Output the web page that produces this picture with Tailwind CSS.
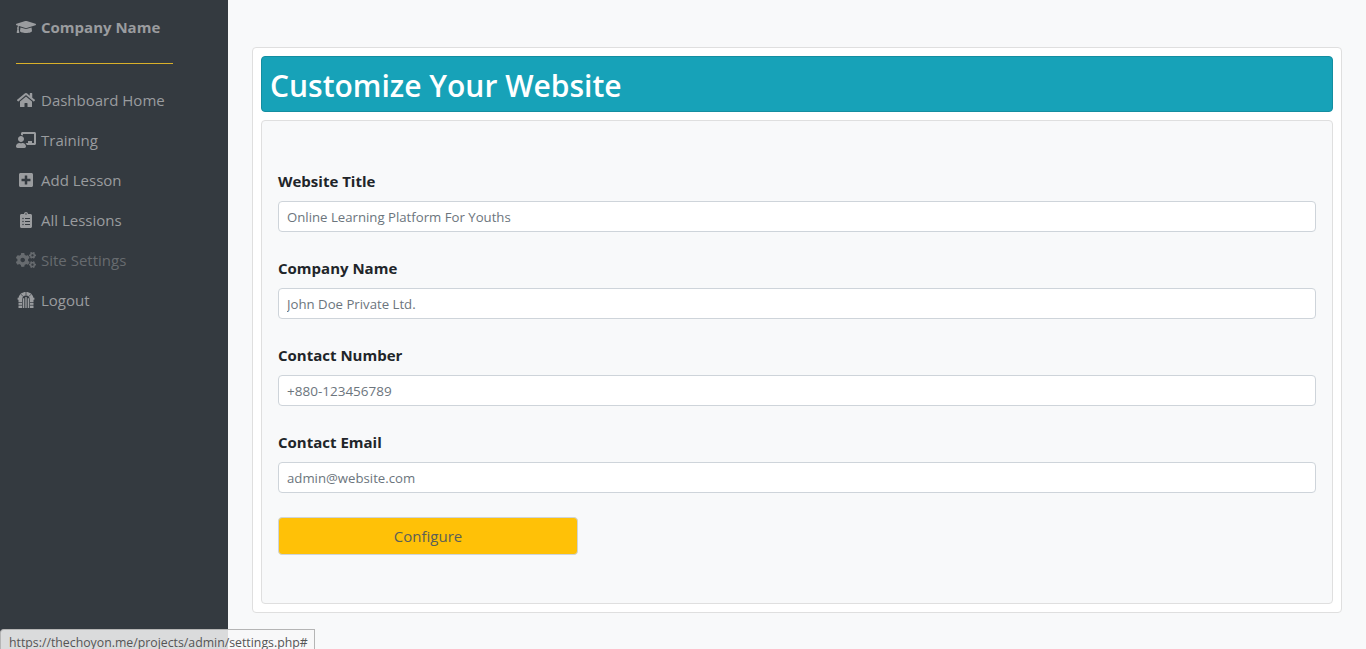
<!DOCTYPE html>
<html lang="en">
<head>
    <meta charset="UTF-8">
    <meta name="viewport" content="width=device-width, initial-scale=1.0">
    <title>Site Settings | Company Name</title>
    <script src="https://cdn.jsdelivr.net/npm/@tailwindcss/browser@4"></script>
</head>
<body class="bg-[#f8f9fa] font-['Open_Sans',sans-serif] overflow-hidden">

    <div class="flex h-[649px]">
        <!-- sidebar -->
        <aside class="w-[228px] shrink-0 bg-[#343a40] pl-4 text-[15px] text-[#9a9c9f]">
            <a href="#" class="flex items-center h-[20px] mt-[17px] font-bold text-[#9a9c9f]">
                <svg class="w-5 h-4 mr-[5px] fill-current" viewBox="0 0 640 512"><path d="M622.34 153.2L343.4 67.5c-15.2-4.67-31.6-4.67-46.79 0L17.66 153.2c-23.54 7.23-23.54 38.36 0 45.59l48.63 14.94c-10.67 13.19-17.23 29.28-17.88 46.9C38.78 266.15 32 276.11 32 288c0 10.78 5.68 19.85 13.86 25.65L20.33 428.53C18.11 438.52 25.71 448 35.94 448h56.11c10.24 0 17.84-9.48 15.62-19.47L82.14 313.65C90.32 307.85 96 298.78 96 288c0-11.57-6.47-21.25-15.66-26.87.76-15.02 8.44-28.3 20.69-36.72L296.6 284.5c9.06 2.78 26.44 6.25 46.79 0l278.95-85.7c23.55-7.24 23.55-38.36 0-45.6zM352.79 315.09c-28.53 8.76-52.84 3.92-65.59 0l-145.02-44.55L128 384c0 35.35 85.96 64 192 64s192-28.65 192-64l-14.18-113.47-145.03 44.56z"/></svg>
                Company Name
            </a>
            <hr class="w-[157px] mt-[26px] mb-4 border-0 h-px bg-[#d9b02a]">
            <nav>
                <a href="#" class="flex items-center h-10">
                    <svg class="w-5 h-4 mr-[5px] fill-current" viewBox="0 0 576 512"><path d="M280.37 148.26L96 300.11V464a16 16 0 0 0 16 16l112.06-.29a16 16 0 0 0 15.92-16V368a16 16 0 0 1 16-16h64a16 16 0 0 1 16 16v95.64a16 16 0 0 0 16 16.05L464 480a16 16 0 0 0 16-16V300L295.67 148.26a12.19 12.19 0 0 0-15.3 0zM571.6 251.47L488 182.56V44.05a12 12 0 0 0-12-12h-56a12 12 0 0 0-12 12v72.61L318.47 43a48 48 0 0 0-61 0L4.34 251.47a12 12 0 0 0-1.6 16.9l25.5 31A12 12 0 0 0 45.15 301l235.22-193.74a12.19 12.19 0 0 1 15.3 0L530.9 301a12 12 0 0 0 16.9-1.6l25.5-31a12 12 0 0 0-1.7-16.93z"/></svg>
                    Dashboard Home
                </a>
                <a href="#" class="flex items-center h-10">
                    <svg class="w-5 h-4 mr-[5px] fill-current" viewBox="0 0 640 512"><path d="M208 352c-2.39 0-4.78.35-7.06 1.09C187.98 357.3 174.35 360 160 360c-14.35 0-27.98-2.7-40.95-6.91-2.28-.74-4.66-1.09-7.05-1.09C49.94 352-.33 402.48 0 464.62.14 490.88 21.73 512 48 512h224c26.27 0 47.86-21.12 48-47.38.33-62.14-49.94-112.62-112-112.62zm-48-32c53.02 0 96-42.98 96-96s-42.98-96-96-96-96 42.98-96 96 42.98 96 96 96zM592 0H208c-26.47 0-48 22.25-48 49.59V96c23.42 0 45.1 6.78 64 17.8V64h352v288h-64v-64H384v64h-76.24c19.1 16.69 33.12 38.73 39.69 64H592c26.47 0 48-22.25 48-49.59V49.59C640 22.25 618.47 0 592 0z"/></svg>
                    Training
                </a>
                <a href="#" class="flex items-center h-10">
                    <svg class="w-5 h-4 mr-[5px] fill-current" viewBox="0 0 448 512"><path d="M400 32H48C21.5 32 0 53.5 0 80v352c0 26.5 21.5 48 48 48h352c26.5 0 48-21.5 48-48V80c0-26.5-21.5-48-48-48zm-32 252c0 6.6-5.4 12-12 12h-92v92c0 6.6-5.4 12-12 12h-56c-6.6 0-12-5.4-12-12v-92H92c-6.6 0-12-5.4-12-12v-56c0-6.6 5.4-12 12-12h92v-92c0-6.6 5.4-12 12-12h56c6.6 0 12 5.4 12 12v92h92c6.6 0 12 5.4 12 12v56z"/></svg>
                    Add Lesson
                </a>
                <a href="#" class="flex items-center h-10">
                    <svg class="w-5 h-4 mr-[5px] fill-current" viewBox="0 0 384 512"><path d="M336 64h-80c0-35.3-28.7-64-64-64s-64 28.7-64 64H48C21.5 64 0 85.5 0 112v352c0 26.5 21.5 48 48 48h288c26.5 0 48-21.5 48-48V112c0-26.5-21.5-48-48-48zM96 424c-13.3 0-24-10.7-24-24s10.7-24 24-24 24 10.7 24 24-10.7 24-24 24zm0-96c-13.3 0-24-10.7-24-24s10.7-24 24-24 24 10.7 24 24-10.7 24-24 24zm0-96c-13.3 0-24-10.7-24-24s10.7-24 24-24 24 10.7 24 24-10.7 24-24 24zm96-192c13.3 0 24 10.7 24 24s-10.7 24-24 24-24-10.7-24-24 10.7-24 24-24zm128 368c0 4.4-3.6 8-8 8H168c-4.4 0-8-3.6-8-8v-16c0-4.4 3.6-8 8-8h144c4.4 0 8 3.6 8 8v16zm0-96c0 4.4-3.6 8-8 8H168c-4.4 0-8-3.6-8-8v-16c0-4.4 3.6-8 8-8h144c4.4 0 8 3.6 8 8v16zm0-96c0 4.4-3.6 8-8 8H168c-4.4 0-8-3.6-8-8v-16c0-4.4 3.6-8 8-8h144c4.4 0 8 3.6 8 8v16z"/></svg>
                    All Lessions
                </a>
                <a href="#" class="flex items-center h-10 text-[#676b6f]">
                    <svg class="w-5 h-4 mr-[5px] fill-current" viewBox="0 0 640 512"><path d="M512.1 191l-8.2 14.3c-3 5.3-9.4 7.5-15.1 5.4-11.8-4.4-22.6-10.7-32.1-18.6-4.6-3.8-5.8-10.5-2.8-15.7l8.2-14.3c-6.9-8-12.3-17.3-15.9-27.4h-16.5c-6 0-11.2-4.3-12.2-10.3-2-12-2.1-24.6 0-37.1 1-6 6.2-10.4 12.2-10.4h16.5c3.6-10.1 9-19.4 15.9-27.4l-8.2-14.3c-3-5.2-1.9-11.9 2.8-15.7 9.5-7.9 20.4-14.2 32.1-18.6 5.7-2.1 12.1.1 15.1 5.4l8.2 14.3c10.5-1.9 21.2-1.9 31.7 0L552 6.3c3-5.3 9.4-7.5 15.1-5.4 11.8 4.4 22.6 10.7 32.1 18.6 4.6 3.8 5.8 10.5 2.8 15.7l-8.2 14.3c6.9 8 12.3 17.3 15.9 27.4h16.5c6 0 11.2 4.3 12.2 10.3 2 12 2.1 24.6 0 37.1-1 6-6.2 10.4-12.2 10.4h-16.5c-3.6 10.1-9 19.4-15.9 27.4l8.2 14.3c3 5.2 1.9 11.9-2.8 15.7-9.5 7.9-20.4 14.2-32.1 18.6-5.7 2.1-12.1-.1-15.1-5.4l-8.2-14.3c-10.4 1.9-21.2 1.9-31.7 0zm-10.5-58.8c38.5 29.6 82.4-14.3 52.8-52.8-38.5-29.7-82.4 14.3-52.8 52.8zM386.3 286.1l33.7 16.8c10.1 5.8 14.5 18.1 10.5 29.1-8.9 24.2-26.4 46.4-42.6 65.8-7.4 8.9-20.2 11.1-30.3 5.3l-29.1-16.8c-16 13.7-34.6 24.6-54.9 31.7v33.6c0 11.6-8.3 21.6-19.7 23.6-24.6 4.2-50.4 4.4-75.9 0-11.5-2-20-11.9-20-23.6V418c-20.3-7.2-38.9-18-54.9-31.7L74 403c-10 5.8-22.9 3.6-30.3-5.3-16.2-19.4-33.3-41.6-42.2-65.7-4-10.9.4-23.2 10.5-29.1l33.3-16.8c-3.9-20.9-3.9-42.4 0-63.4L12 205.8c-10.1-5.8-14.6-18.1-10.5-29 8.9-24.2 26-46.4 42.2-65.8 7.4-8.9 20.2-11.1 30.3-5.3l29.1 16.8c16-13.7 34.6-24.6 54.9-31.7V57.1c0-11.5 8.2-21.5 19.6-23.5 24.6-4.2 50.5-4.4 76-.1 11.5 2 20 11.9 20 23.6v33.6c20.3 7.2 38.9 18 54.9 31.7l29.1-16.8c10-5.8 22.9-3.6 30.3 5.3 16.2 19.4 33.2 41.6 42.1 65.8 4 10.9.1 23.2-10 29.1l-33.7 16.8c3.9 21 3.9 42.5 0 63.5zm-117.6 21.1c59.2-77-28.7-164.9-105.7-105.7-59.2 77 28.7 164.9 105.7 105.7zm243.4 182.7l-8.2 14.3c-3 5.3-9.4 7.5-15.1 5.4-11.8-4.4-22.6-10.7-32.1-18.6-4.6-3.8-5.8-10.5-2.8-15.7l8.2-14.3c-6.9-8-12.3-17.3-15.9-27.4h-16.5c-6 0-11.2-4.3-12.2-10.3-2-12-2.1-24.6 0-37.1 1-6 6.2-10.4 12.2-10.4h16.5c3.6-10.1 9-19.4 15.9-27.4l-8.2-14.3c-3-5.2-1.9-11.9 2.8-15.7 9.5-7.9 20.4-14.2 32.1-18.6 5.7-2.1 12.1.1 15.1 5.4l8.2 14.3c10.5-1.9 21.2-1.9 31.7 0l8.2-14.3c3-5.3 9.4-7.5 15.1-5.4 11.8 4.4 22.6 10.7 32.1 18.6 4.6 3.8 5.8 10.5 2.8 15.7l-8.2 14.3c6.9 8 12.3 17.3 15.9 27.4h16.5c6 0 11.2 4.3 12.2 10.3 2 12 2.1 24.6 0 37.1-1 6-6.2 10.4-12.2 10.4h-16.5c-3.6 10.1-9 19.4-15.9 27.4l8.2 14.3c3 5.2 1.9 11.9-2.8 15.7-9.5 7.9-20.4 14.2-32.1 18.6-5.7 2.1-12.1-.1-15.1-5.4l-8.2-14.3c-10.4 1.9-21.2 1.9-31.7 0zM501.6 431c38.5 29.6 82.4-14.3 52.8-52.8-38.5-29.6-82.4 14.3-52.8 52.8z"/></svg>
                    Site Settings
                </a>
                <a href="#" class="flex items-center h-10">
                    <svg class="w-5 h-4 mr-[5px]" viewBox="0 0 20 16">
                        <path fill="currentColor" d="M10 0C6 0 3.1 2.4 2.6 5.8H1.6v2H2.5V16h3.7V7.6C6.2 5.2 7.8 3.6 10 3.6s3.8 1.6 3.8 4V16h3.7V7.8h.9v-2h-1C16.9 2.4 14 0 10 0z"/>
                        <path fill="currentColor" d="M6.9 6.2h1.4V16H6.9zM9.3 5h1.4v11H9.3zM11.7 6.2h1.4V16h-1.4z"/>
                        <path fill="none" stroke="#343a40" stroke-width=".7" d="M2 10.5h4M2 13.3h4M14 10.5h4M14 13.3h4M5 2.2l2.2 2.4M15 2.2l-2.2 2.4M10 0v3.4"/>
                    </svg>
                    Logout
                </a>
            </nav>
        </aside>

        <!-- main -->
        <main class="flex-1 pt-[47px] pl-6 pr-6">
            <div class="h-[566px] bg-white border border-[#dfdfdf] rounded p-2 flex flex-col gap-2">
                <h1 class="h-14 shrink-0 bg-[#17a2b8] border border-[#148ea1] rounded pl-2 pt-0.5 flex items-center text-white text-[30px] font-semibold">Customize Your Website</h1>

                <form class="flex-1 bg-[#f8f9fa] border border-[#dfdfdf] rounded px-4 pt-[48px]">
                    <div class="mb-6">
                        <label for="title" class="block h-[24px] mb-2 text-[15px] leading-[24px] font-bold text-[#212529]">Website Title</label>
                        <input id="title" type="text" placeholder="Online Learning Platform For Youths" class="w-full h-[31px] px-2 bg-white border border-[#ced4da] rounded text-[13.2px] placeholder:text-[#6c757d] outline-none">
                    </div>
                    <div class="mb-6">
                        <label for="company" class="block h-[24px] mb-2 text-[15px] leading-[24px] font-bold text-[#212529]">Company Name</label>
                        <input id="company" type="text" placeholder="John Doe Private Ltd." class="w-full h-[31px] px-2 bg-white border border-[#ced4da] rounded text-[13.2px] placeholder:text-[#6c757d] outline-none">
                    </div>
                    <div class="mb-6">
                        <label for="phone" class="block h-[24px] mb-2 text-[15px] leading-[24px] font-bold text-[#212529]">Contact Number</label>
                        <input id="phone" type="text" placeholder="+880-123456789" class="w-full h-[31px] px-2 bg-white border border-[#ced4da] rounded text-[13.5px] placeholder:text-[#6c757d] outline-none">
                    </div>
                    <div class="mb-6">
                        <label for="email" class="block h-[24px] mb-2 text-[15px] leading-[24px] font-bold text-[#212529]">Contact Email</label>
                        <input id="email" type="text" placeholder="admin@website.com" class="w-full h-[31px] px-2 bg-white border border-[#ced4da] rounded text-[13.2px] placeholder:text-[#6c757d] outline-none">
                    </div>
                    <button type="button" class="block w-[300px] h-[38px] bg-[#ffc107] border border-[#ced4da] rounded text-[15px] text-[#5b5f57]">Configure</button>
                </form>
            </div>
        </main>
    </div>

    <!-- browser status bar -->
    <div class="absolute left-0 top-[629px] w-[315px] h-5 pl-2 bg-[#f8f8f8]/85 border border-[#b5b5b5] border-b-0 rounded-tl-sm text-[12.3px] leading-[26px] text-[#555] overflow-hidden whitespace-nowrap">https://thechoyon.me/projects/admin/settings.php#</div>

</body>
</html>
